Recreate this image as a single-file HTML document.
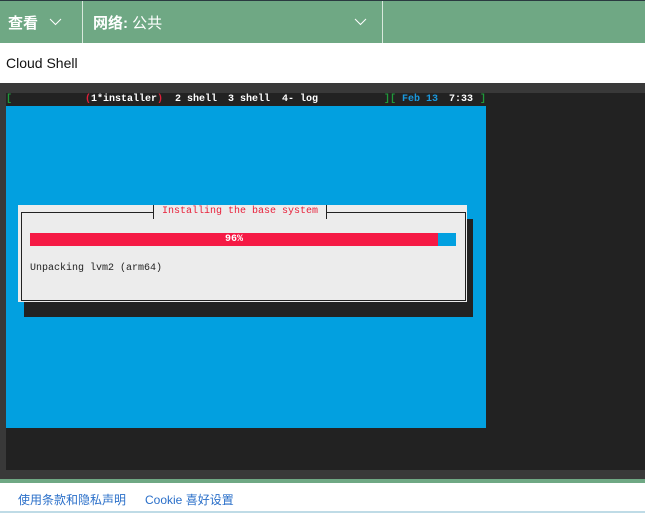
<!DOCTYPE html><html><head><style>
*{margin:0;padding:0;box-sizing:border-box}
body{width:645px;height:513px;overflow:hidden;background:#fff;font-family:"Liberation Sans","Noto Sans CJK SC",sans-serif;position:relative}
.a{position:absolute}
.m{font-family:"Liberation Mono","DejaVu Sans Mono",monospace;font-size:10px;line-height:13px;white-space:pre}
.s{position:absolute;top:93px;color:#fff;font-family:"Liberation Mono","DejaVu Sans Mono",monospace;font-size:10px;line-height:14px;white-space:pre;font-weight:bold}
</style></head><body>
<div class="a" style="left:0;top:0;width:645px;height:1px;background:#2a3a40"></div>
<div class="a" style="left:0;top:1px;width:645px;height:42px;background:#6fa884"></div>
<div class="a" style="left:82px;top:1px;width:1px;height:42px;background:#d8e8dc"></div>
<div class="a" style="left:382px;top:1px;width:1px;height:42px;background:#d8e8dc"></div>
<div class="a" style="left:8px;top:12px;color:#fff;font-size:15px;font-weight:bold">查看</div>
<svg class="a" style="left:49px;top:18px" width="13" height="8"><path d="M1 1L6.5 6.5L12 1" stroke="#fff" fill="none" stroke-width="1"/></svg>
<div class="a" style="left:93px;top:12px;color:#fff;font-size:15px"><b>网络:</b> 公共</div>
<svg class="a" style="left:354px;top:18px" width="13" height="8"><path d="M1 1L6.5 6.5L12 1" stroke="#fff" fill="none" stroke-width="1"/></svg>
<div class="a" style="left:6px;top:55px;font-size:14px;color:#111">Cloud Shell</div>
<div class="a" style="left:0;top:83px;width:645px;height:396px;background:#393939"></div>
<div class="a" style="left:6px;top:93px;width:639px;height:377px;background:#222"></div>
<div class="s" style="left:6px;color:#1f9a3a">[</div>
<div class="s" style="left:85px"><span style="color:#e0203a">(</span>1*installer<span style="color:#e0203a">)</span></div>
<div class="s" style="left:175px">2 shell</div>
<div class="s" style="left:228px">3 shell</div>
<div class="s" style="left:282px">4- log</div>
<div class="s" style="left:384px;color:#1f9a3a">][</div>
<div class="s" style="left:402px;color:#1a9ae0">Feb 13</div>
<div class="s" style="left:449px">7:33</div>
<div class="s" style="left:480px;color:#1f9a3a">]</div>
<div class="a" style="left:6px;top:106px;width:480px;height:322px;background:#02a0e0"></div>
<div class="a" style="left:24px;top:219px;width:449px;height:98px;background:#222"></div>
<div class="a" style="left:18px;top:205px;width:449px;height:97px;background:#ececec"></div>
<div class="a" style="left:21px;top:212px;width:445px;height:89px;border:1px solid #222"></div>
<div class="a m" style="left:153px;top:205px;height:14px;line-height:14px;padding:0 8px;background:#ececec;color:#e8203a;border-left:1px solid #222;border-right:1px solid #222">Installing the base system</div>
<div class="a" style="left:30px;top:233px;width:426px;height:13px;background:#02a0e0"></div>
<div class="a m" style="left:30px;top:233px;width:408px;height:13px;background:#f51a45;color:#fff;text-align:center;font-weight:bold">96%</div>
<div class="a m" style="left:30px;top:262px;color:#222">Unpacking lvm2 (arm64)</div>
<div class="a" style="left:0;top:479px;width:645px;height:4px;background:#6fa884"></div>
<div class="a" style="left:18px;top:491px;font-size:12px;color:#2a6fc9">使用条款和隐私声明</div>
<div class="a" style="left:145px;top:491px;font-size:12px;color:#2a6fc9">Cookie 喜好设置</div>
<div class="a" style="left:0;top:511px;width:645px;height:2px;background:#bfdbe6"></div>
</body></html>
